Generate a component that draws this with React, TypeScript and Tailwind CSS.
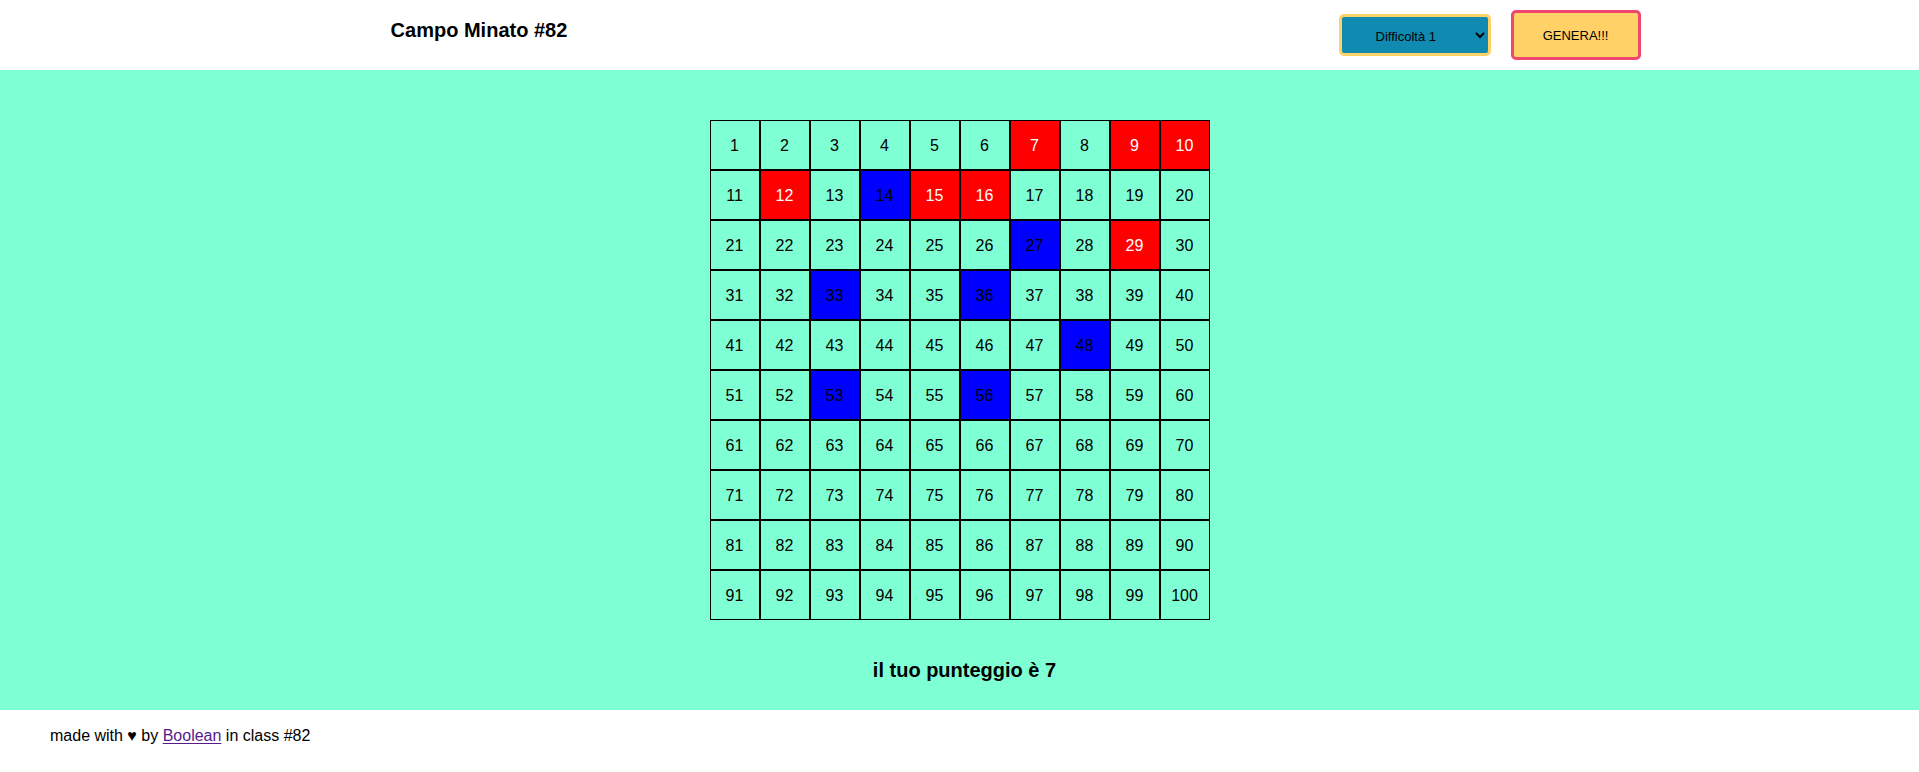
import { useState } from "react";

const SIZES: Record<string, number> = { "1": 100, "2": 81, "3": 49 };
const COLUMNS: Record<string, string> = {
  "1": "grid-cols-[repeat(10,50px)]",
  "2": "grid-cols-[repeat(9,50px)]",
  "3": "grid-cols-[repeat(7,50px)]",
};

function drawBombs(total: number): number[] {
  const bombs = new Set<number>();
  while (bombs.size < 7) bombs.add(Math.floor(Math.random() * total) + 1);
  return [...bombs];
}

type CellProps = { value: number; state: "hidden" | "safe" | "bomb"; onOpen: () => void };

function Cell({ value, state, onOpen }: CellProps) {
  const look =
    state === "bomb"
      ? "bg-[#ff0000] text-white"
      : state === "safe"
        ? "bg-[#0000ff] text-black"
        : "bg-transparent text-black";
  return (
    <button
      type="button"
      onClick={onOpen}
      className={`flex size-[50px] cursor-pointer items-center justify-center border border-black pt-0.5 ${look}`}
    >
      {value}
    </button>
  );
}

export default function App() {
  const [difficulty, setDifficulty] = useState("1");
  const [level, setLevel] = useState("1");
  const [bombs, setBombs] = useState([7, 9, 10, 12, 15, 16, 29]);
  const [opened, setOpened] = useState([14, 27, 33, 36, 48, 53, 56]);
  const [over, setOver] = useState(true);

  const generate = () => {
    setLevel(difficulty);
    setBombs(drawBombs(SIZES[difficulty]));
    setOpened([]);
    setOver(false);
  };

  const open = (n: number) => {
    if (over || opened.includes(n)) return;
    if (bombs.includes(n)) setOver(true);
    else setOpened([...opened, n]);
  };

  const cells = Array.from({ length: SIZES[level] }, (_, i) => i + 1);

  return (
    <div className="min-h-screen bg-white font-['Liberation_Sans',Arial,sans-serif] text-base text-black">
      <header className="grid grid-cols-[390fr_auto_770fr_auto_278fr] py-2.5">
        <h1 className="col-start-2 pt-2 text-xl leading-6 font-bold">Campo Minato #82</h1>
        <div className="col-start-4 flex items-center gap-5">
          <select
            aria-label="Difficoltà"
            value={difficulty}
            onChange={(e) => setDifficulty(e.target.value)}
            className="h-[42px] w-[152px] rounded-[5px] border-3 border-[#ffd166] bg-[#118ab2] pt-0.5 pl-[30px] text-[13px]"
          >
            <option value="1">Difficoltà 1</option>
            <option value="2">Difficoltà 2</option>
            <option value="3">Difficoltà 3</option>
          </select>
          <button
            type="button"
            onClick={generate}
            className="h-[50px] w-[130px] cursor-pointer rounded-[5px] border-3 border-[#ef476f] bg-[#ffd166] pt-0.5 text-[13px]"
          >
            GENERA!!!
          </button>
        </div>
      </header>

      <main className="flex flex-col items-center bg-[#7fffd4] pt-[50px] pb-7">
        <div className={`grid ${COLUMNS[level]}`}>
          {cells.map((n) => (
            <Cell
              key={n}
              value={n}
              state={over && bombs.includes(n) ? "bomb" : opened.includes(n) ? "safe" : "hidden"}
              onOpen={() => open(n)}
            />
          ))}
        </div>
        <h2 className="mt-[38px] pl-2.5 text-xl leading-6 font-bold">il tuo punteggio è {opened.length}</h2>
      </main>

      <footer className="px-[50px] py-4">
        <p className="text-base leading-5">
          made with ♥ by{" "}
          <a href="https://boolean.careers" className="text-[#551a8b] underline underline-offset-2">
            Boolean
          </a>{" "}
          in class #82
        </p>
      </footer>
    </div>
  );
}
